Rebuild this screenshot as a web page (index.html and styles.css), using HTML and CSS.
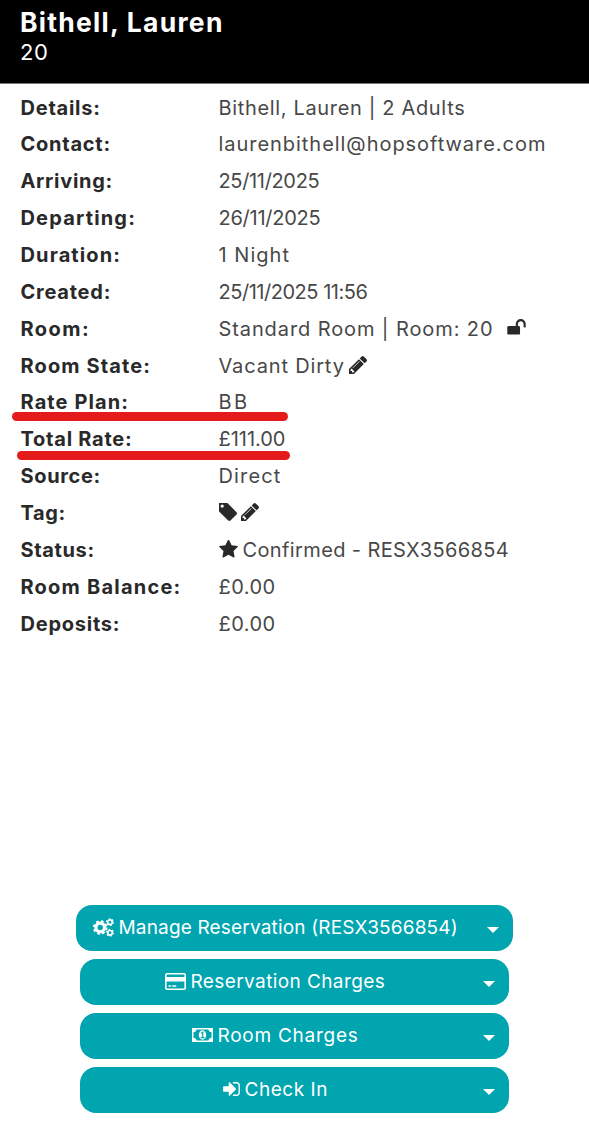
FILE: index.html
```
<!DOCTYPE html>
<html lang="en">
<head>
<meta charset="utf-8">
<title>Reservation – Bithell, Lauren</title>
<link rel="stylesheet" href="styles.css">
</head>
<body>
<svg class="defs" aria-hidden="true">
  <symbol id="pencil" viewBox="128 149 1515 1515"><path d="M491 1536l91-91-235-235-91 91v107h128v128h107zm523-928q0-22-22-22-10 0-17 7l-542 542q-7 7-7 17 0 22 22 22 10 0 17-7l542-542q7-7 7-17zm-54-192l416 416-832 832h-416v-416zm683 96q0 53-37 90l-166 166-416-416 166-165q36-38 90-38 53 0 91 38l235 234q37 39 37 91z"/></symbol>
</svg>
<header class="head">
  <h1 class="guest">Bithell, Lauren</h1>
  <div class="room-no">20</div>
</header>
<dl class="details">
  <div class="row details-row"><dt>Details:</dt><dd>Bithell, Lauren | 2 Adults</dd></div>
  <div class="row contact"><dt>Contact:</dt><dd>laurenbithell@hopsoftware.com</dd></div>
  <div class="row arriving"><dt>Arriving:</dt><dd>25/11/2025</dd></div>
  <div class="row departing"><dt>Departing:</dt><dd>26/11/2025</dd></div>
  <div class="row duration"><dt>Duration:</dt><dd>1 Night</dd></div>
  <div class="row created"><dt>Created:</dt><dd>25/11/2025 11:56</dd></div>
  <div class="row room"><dt>Room:</dt><dd>Standard Room | Room: 20
    <svg class="icon unlock" viewBox="64 128 1664 1536"><path d="M1728 576v256q0 26-19 45t-45 19h-64q-26 0-45-19t-19-45v-256q0-106-75-181t-181-75-181 75-75 181v192h96q40 0 68 28t28 68v576q0 40-28 68t-68 28h-960q-40 0-68-28t-28-68v-576q0-40 28-68t68-28h672v-192q0-185 131.500-316.500t316.500-131.500 316.500 131.500 131.500 316.500z"/></svg></dd></div>
  <div class="row room-state"><dt>Room State:</dt><dd>Vacant Dirty <svg class="icon pencil"><use href="#pencil"/></svg></dd></div>
  <div class="row rate-plan marked"><dt>Rate Plan:</dt><dd>BB</dd></div>
  <div class="row total-rate marked"><dt>Total Rate:</dt><dd>£111.00</dd></div>
  <div class="row source"><dt>Source:</dt><dd>Direct</dd></div>
  <div class="row tag-row"><dt>Tag:</dt><dd>
    <svg class="icon tag" viewBox="192 256 1451 1451"><path d="M576 448q0-53-37.500-90.500t-90.500-37.500-90.500 37.500-37.500 90.500 37.500 90.500 90.500 37.500 90.500-37.500 37.500-90.500zm1067 576q0 53-37 90l-491 492q-39 37-91 37-53 0-90-37l-715-716q-38-37-64.500-101t-26.500-117v-416q0-52 38-90t90-38h416q53 0 117 26.500t102 64.500l715 714q37 39 37 91z" transform="translate(0 64)"/></svg>
    <svg class="icon pencil"><use href="#pencil"/></svg></dd></div>
  <div class="row status"><dt>Status:</dt><dd>
    <svg class="icon star" viewBox="64 73 1664 1587"><path d="M1728 647q0 22-26 48l-363 354 86 500q1 7 1 20 0 21-10.500 35.500t-30.500 14.500q-19 0-40-12l-449-236-449 236q-22 12-40 12-21 0-31.500-14.500t-10.500-35.500q0-6 2-20l86-500-364-354q-25-27-25-48 0-37 56-46l502-73 225-455q19-41 49-41t49 41l225 455 502 73q56 9 56 46z"/></svg>Confirmed - RESX3566854</dd></div>
  <div class="row balance"><dt>Room Balance:</dt><dd>£0.00</dd></div>
  <div class="row deposits"><dt>Deposits:</dt><dd>£0.00</dd></div>
</dl>
<nav class="actions">
  <button class="btn manage">
    <svg class="icon cogs" viewBox="0 0 21 19">
      <g fill="none" stroke="#fff">
        <circle cx="7.200" cy="9.500" r="4.300" stroke-width="3.200"/>
        <circle cx="7.200" cy="9.500" r="6.300" stroke-width="2" stroke-dasharray="2.700 2.248"/>
        <circle cx="17" cy="4.200" r="2.300" stroke-width="1.700"/>
        <circle cx="17" cy="4.200" r="3.400" stroke-width="1.200" stroke-dasharray="1.600 1.960"/>
        <circle cx="17" cy="14.800" r="2.300" stroke-width="1.700"/>
        <circle cx="17" cy="14.800" r="3.400" stroke-width="1.200" stroke-dasharray="1.600 1.960"/>
      </g>
    </svg><span class="label">Manage Reservation (RESX3566854)</span><i class="caret"></i>
  </button>
  <button class="btn reservation">
    <svg class="icon card" viewBox="0 0 21 17"><rect x=".8" y=".8" width="19.400" height="15.400" rx="1.300" fill="none" stroke="#fff" stroke-width="1.600"/><path fill="#fff" d="M1 4h19v4.500H1zM3.500 12.300h2.700v1.400H3.500zM7.300 12.300h4v1.400h-4z"/></svg><span class="label">Reservation Charges</span><i class="caret"></i>
  </button>
  <button class="btn charges">
    <svg class="icon money" viewBox="0 0 21 14"><path fill="#fff" fill-rule="evenodd" d="M0 0h21v14H0zM4.700 1.500Q4.300 4 1.500 4.300v5.400Q4.300 10 4.700 12.500h11.600q.4-2.500 3.200-2.800V4.300Q16.700 4 16.300 1.500z"/><ellipse cx="10.500" cy="7" rx="3.700" ry="4.700" fill="#fff"/><path fill="none" stroke="#00a5b0" stroke-width="1.200" d="M9 5.200l1.700-1.100v5.300M8.700 9.700h3.900"/></svg><span class="label">Room Charges</span><i class="caret"></i>
  </button>
  <button class="btn checkin">
    <svg class="icon signin" viewBox="128 256 1536 1280"><path fill="#fff" d="M1312 896q0 26-19 45l-544 544q-19 19-45 19t-45-19-19-45v-288h-448q-26 0-45-19t-19-45v-384q0-26 19-45t45-19h448v-288q0-26 19-45t45-19 45 19l544 544q19 19 19 45zm352-352v704q0 119-84.500 203.500t-203.500 84.500h-320q-13 0-22.500-9.500t-9.500-22.500v-64q0-32 32-32h320q66 0 113-47t47-113v-704q0-66-47-113t-113-47h-320q-32 0-32-32v-64q0-32 32-32h320q119 0 203.500 84.500t84.500 203.500z"/></svg><span class="label">Check In</span><i class="caret"></i>
  </button>
</nav>
</body>
</html>
```
FILE: styles.css
```
body {
  margin: 0;
  font: 400 20px Inter, sans-serif;
  color: #484848;
  background: #fff;
}

.defs { position: absolute; width: 0; height: 0; }

/* Header */
.head {
  box-sizing: border-box;
  height: 84px;
  padding: 7px 20px 0;
  background: #000;
  color: #fff;
  border-bottom: 1px solid #777;
}
.guest { margin: 0; font-size: 26.5px; line-height: 30px; font-weight: 700; letter-spacing: 1.26px; }
.room-no { font-size: 22px; line-height: 30px; letter-spacing: .47px; }

/* Detail list */
.details { margin: 5.6px 0 0; padding-left: 20.5px; }
.row { display: flex; height: 36.86px; line-height: 36.86px; white-space: nowrap; }
dt { width: 198px; flex: none; font-weight: 700; color: #292929; letter-spacing: .76px; }
dd { margin: 0; display: flex; align-items: center; }
.icon { display: block; flex: none; fill: #292929; margin-bottom: 3px; }

.details-row dd { letter-spacing: .66px; }
.contact dd { letter-spacing: .96px; }
.arriving dt { letter-spacing: .69px; }
.arriving dd { letter-spacing: -.34px; }
.departing dt { letter-spacing: 1.17px; }
.departing dd { letter-spacing: -.26px; }
.duration dt { letter-spacing: 1.12px; }
.duration dd { letter-spacing: 1.03px; }
.created dd { letter-spacing: -.47px; }
.room dt { letter-spacing: 1.48px; }
.room dd { letter-spacing: .9px; }
.room-state dt { letter-spacing: 1.12px; }
.room-state dd { letter-spacing: .84px; }
.rate-plan dt { letter-spacing: 1.1px; }
.rate-plan dd { letter-spacing: 2.5px; }
.total-rate dd { letter-spacing: -.02px; }
.source dt { letter-spacing: .64px; }
.source dd { letter-spacing: 1.15px; }
.tag-row dt, .status dt { letter-spacing: .64px; }
.status dd { letter-spacing: .38px; }
.balance dt { letter-spacing: 1.22px; }
.balance dd, .deposits dd { letter-spacing: .48px; }

.unlock { width: 19px; height: 17px; margin-left: 14px; }
.pencil { width: 18px; height: 18px; margin-left: 4px; }
.tag { width: 18px; height: 18px; }
.star { width: 19px; height: 18px; margin-right: 5px; }

/* Red marker strokes under the rate rows */
.marked { position: relative; }
.marked::after {
  content: "";
  position: absolute;
  height: 9px;
  border-radius: 5px;
  background: #e51a1b;
}
.rate-plan::after { left: -8.5px; top: 27.4px; width: 276px; }
.total-rate::after { left: -3.5px; top: 29.4px; width: 273px; }

/* Action buttons */
.actions {
  margin-top: 263px;
  display: flex;
  flex-direction: column;
  gap: 8px;
  padding: 0 80px;
}
.btn {
  box-sizing: border-box;
  display: flex;
  align-items: center;
  height: 46px;
  padding: 0 14px 0 0;
  border: 0;
  border-radius: 16px;
  background: #00a5b0;
  color: #fff;
  font: 400 19px Inter, sans-serif;
  white-space: nowrap;
}
.label { margin-left: 4.5px; line-height: 46px; }
.btn .icon { margin-bottom: 2px; }
.caret {
  margin: 3px 0 0 auto;
  border: 6px solid transparent;
  border-top-color: #fff;
  border-bottom: 0;
}
.manage { margin: 0 -4px; padding-left: 17px; }
.manage .label { letter-spacing: .17px; }
.reservation { padding-left: 85px; }
.reservation .label { letter-spacing: .4px; }
.charges { padding-left: 112px; }
.charges .label { letter-spacing: .74px; }
.checkin { padding-left: 143px; }
.checkin .label { letter-spacing: .55px; }
.cogs { width: 21px; height: 19px; }
.card { width: 21px; height: 17px; }
.money { width: 21px; height: 14px; }
.signin { width: 17px; height: 14px; }
```
